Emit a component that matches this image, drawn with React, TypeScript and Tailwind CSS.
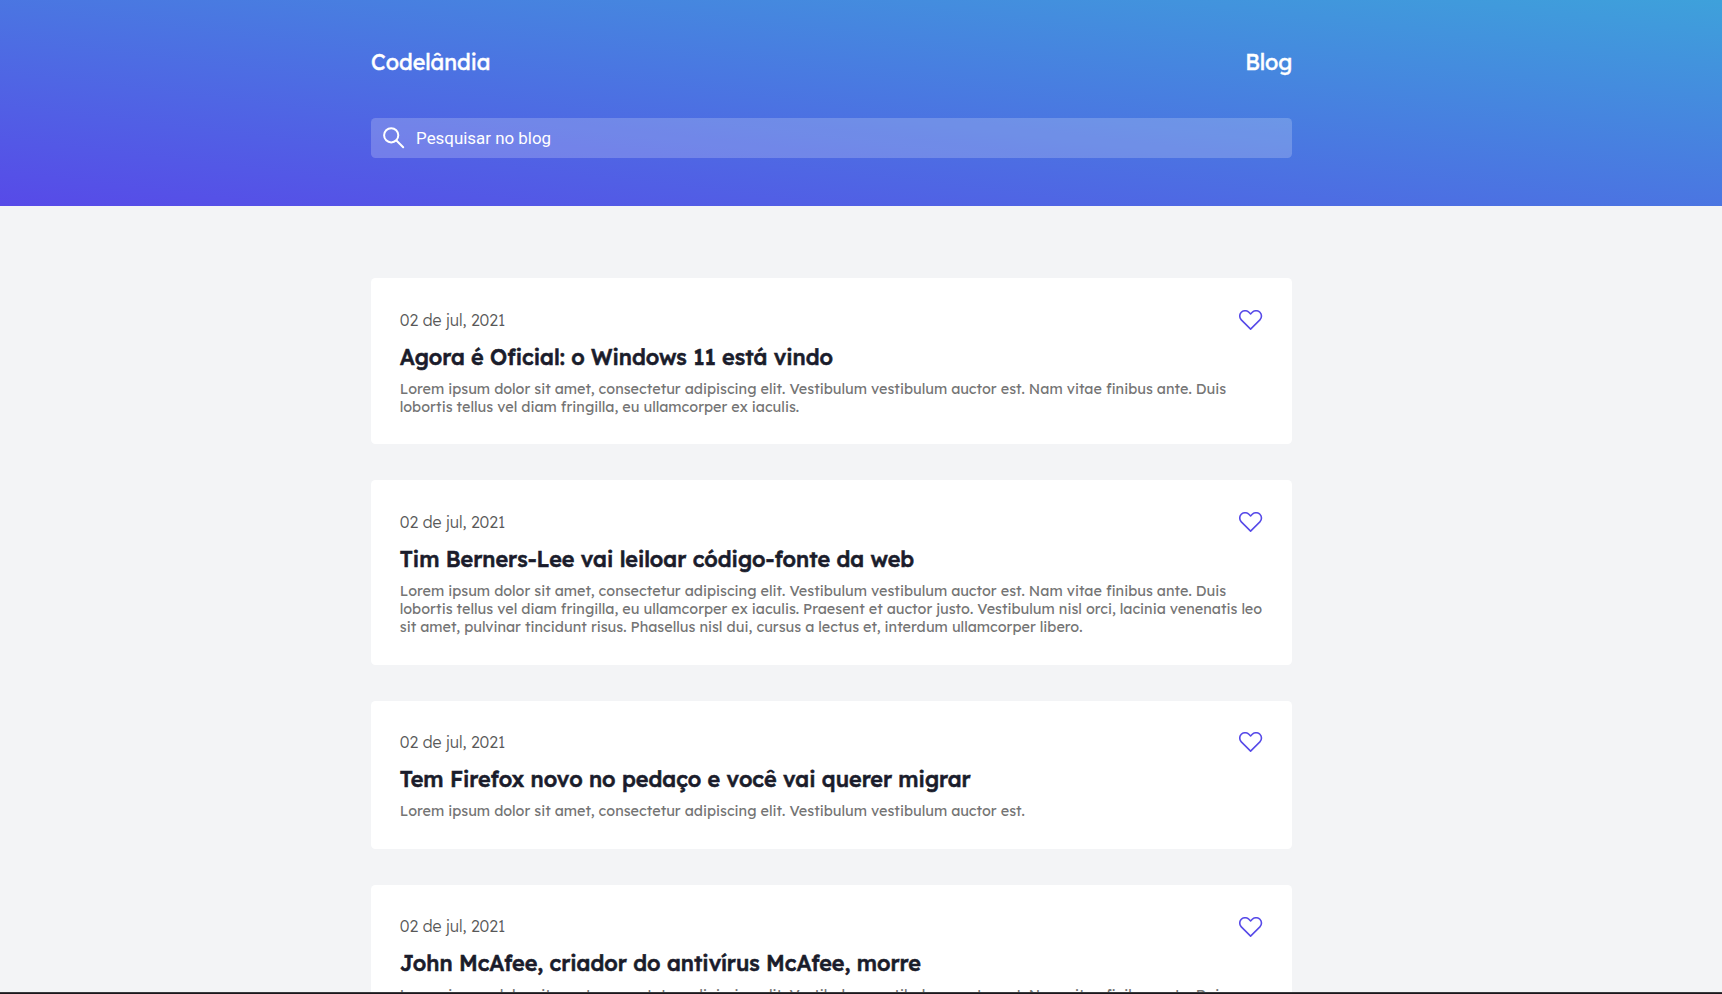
type Post = { date: string; title: string; text: string };

const posts: Post[] = [
  {
    date: "02 de jul, 2021",
    title: "Agora é Oficial: o Windows 11 está vindo",
    text: "Lorem ipsum dolor sit amet, consectetur adipiscing elit. Vestibulum vestibulum auctor est. Nam vitae finibus ante. Duis lobortis tellus vel diam fringilla, eu ullamcorper ex iaculis.",
  },
  {
    date: "02 de jul, 2021",
    title: "Tim Berners-Lee vai leiloar código-fonte da web",
    text: "Lorem ipsum dolor sit amet, consectetur adipiscing elit. Vestibulum vestibulum auctor est. Nam vitae finibus ante. Duis lobortis tellus vel diam fringilla, eu ullamcorper ex iaculis. Praesent et auctor justo. Vestibulum nisl orci, lacinia venenatis leo sit amet, pulvinar tincidunt risus. Phasellus nisl dui, cursus a lectus et, interdum ullamcorper libero.",
  },
  {
    date: "02 de jul, 2021",
    title: "Tem Firefox novo no pedaço e você vai querer migrar",
    text: "Lorem ipsum dolor sit amet, consectetur adipiscing elit. Vestibulum vestibulum auctor est.",
  },
  {
    date: "02 de jul, 2021",
    title: "John McAfee, criador do antivírus McAfee, morre",
    text: "Lorem ipsum dolor sit amet, consectetur adipiscing elit. Vestibulum vestibulum auctor est. Nam vitae finibus ante. Duis",
  },
];

function HeartIcon() {
  return (
    <svg className="mr-px h-5 w-6" viewBox="0 0 24 20" fill="none" stroke="#574ae8" strokeWidth="1.6" strokeLinejoin="round">
      <path d="M11.6 19.1 2.3 9.9A5.35 5.35 0 0 1 9.9 2.3L11.6 4 13.3 2.3A5.35 5.35 0 0 1 20.9 9.9Z" />
    </svg>
  );
}

function SearchIcon() {
  return (
    <svg className="h-[22px] w-[22px] shrink-0" viewBox="0 0 22 22" fill="none" stroke="white" strokeWidth="2" strokeLinecap="round">
      <circle cx="8.2" cy="8.3" r="7.1" />
      <path d="M13.4 13.5 20.2 20.2" />
    </svg>
  );
}

function PostCard({ date, title, text }: Post) {
  return (
    <article className="rounded-[4.5px] bg-white p-[28.8px]">
      <div className="flex h-[26.2px] items-center justify-between">
        <time className="pb-[0.4px] text-[15.9px] leading-[20px] font-light text-[#585858]">{date}</time>
        <HeartIcon />
      </div>
      <h2 className="mt-[9.5px] text-[21.6px] leading-[27px] font-medium text-[#1a1c2b] [-webkit-text-stroke:0.6px_#1a1c2b]">
        {title}
      </h2>
      <p className="mt-[9.93px] text-[14.4px] leading-[18px] text-[#747474]">{text}</p>
    </article>
  );
}

export default function App() {
  return (
    <div className="flex h-[994px] flex-col overflow-hidden bg-[#f3f4f6] font-[Lexend,Inter,sans-serif]">
      <div className="h-[992px] overflow-hidden">
        <header className="h-[206px] bg-[linear-gradient(to_top_right,#574ae8,#3ea1db)] pt-12 pl-[371px]">
          <div className="w-[921.3px]">
            <div className="flex justify-between text-[21.6px] leading-[27px] font-normal text-white [-webkit-text-stroke:0.45px_white]">
              <h1>Codelândia</h1>
              <span>Blog</span>
            </div>
            <div className="mt-[43px] flex h-10 items-center rounded-[4.5px] bg-white/20 pl-[11.5px] font-[Roboto,sans-serif] text-white">
              <SearchIcon />
              <span className="ml-[11.6px] text-[16.9px] leading-5">Pesquisar no blog</span>
            </div>
          </div>
        </header>
        <main className="pt-[72.2px] pl-[371px]">
          <div className="flex w-[921.3px] flex-col gap-9">
            {posts.map((post) => (
              <PostCard key={post.title} {...post} />
            ))}
          </div>
        </main>
      </div>
      <div className="h-0.5 shrink-0 border-t border-[#39393c] bg-[#1b181c]" />
    </div>
  );
}
